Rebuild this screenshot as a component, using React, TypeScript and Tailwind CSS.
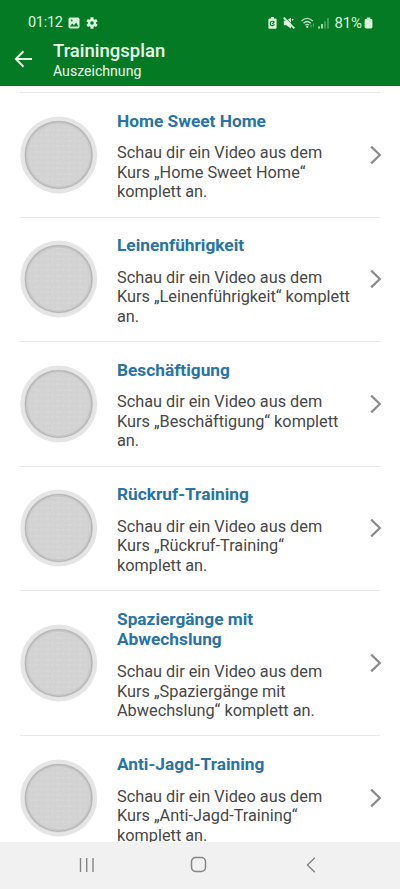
import React from 'react';

const items = [
  {
    title: 'Home Sweet Home',
    text: 'Schau dir ein Video aus dem\nKurs „Home Sweet Home“\nkomplett an.',
  },
  {
    title: 'Leinenführigkeit',
    text: 'Schau dir ein Video aus dem\nKurs „Leinenführigkeit“ komplett\nan.',
  },
  {
    title: 'Beschäftigung',
    text: 'Schau dir ein Video aus dem\nKurs „Beschäftigung“ komplett\nan.',
  },
  {
    title: 'Rückruf-Training',
    text: 'Schau dir ein Video aus dem\nKurs „Rückruf-Training“\nkomplett an.',
  },
  {
    title: 'Spaziergänge mit\nAbwechslung',
    text: 'Schau dir ein Video aus dem\nKurs „Spaziergänge mit\nAbwechslung“ komplett an.',
  },
  {
    title: 'Anti-Jagd-Training',
    text: 'Schau dir ein Video aus dem\nKurs „Anti-Jagd-Training“\nkomplett an.',
  },
];

const StatusBar = () => (
  <div className="flex h-[38px] items-end justify-between pb-[6.5px] pl-[28px] pr-[27px] text-[#d9f7d9]">
    <div className="flex items-center">
      <span className="w-[40px] whitespace-nowrap text-[14.5px] leading-[18px] tracking-[-0.3px]">01:12</span>
      <svg width="12" height="12" viewBox="0 0 12 12" className="block">
        <rect x="0.5" y="0.5" width="11" height="11" rx="1.8" fill="currentColor" />
        <path d="M1.8 9.6 4.3 6.5l1.6 1.8 2.2-2.9 2.4 4.2z" fill="#057a25" />
        <circle cx="3.7" cy="3.5" r="0.9" fill="#057a25" />
      </svg>
      <svg width="12" height="12" viewBox="0 0 12 12" className="ml-[6px] block">
        <g stroke="currentColor" strokeWidth="3">
          <path d="M6 .3v11.4M1.1 3.2l9.8 5.6M1.1 8.8l9.8-5.6" />
        </g>
        <circle cx="6" cy="6" r="4.1" fill="currentColor" />
        <circle cx="6" cy="6" r="1.8" fill="#057a25" />
      </svg>
    </div>
    <div className="flex items-center">
      <svg width="9" height="12" viewBox="0 0 9 12" className="block">
        <path d="M3 0h3v1.4h1.6q1 0 1 1v8.4q0 1-1 1H1.4q-1 0-1-1V2.4q0-1 1-1H3z" fill="currentColor" />
        <path d="M6.2 5.2a2.2 2.2 0 1 0 .2 2.1M4.2 7l2.4-2.3" fill="none" stroke="#057a25" strokeWidth="1.1" />
      </svg>
      <svg width="12" height="12" viewBox="0 0 12 12" className="ml-[6px] block">
        <path d="M.8 3.7h2.6L8 .4v11.2L3.4 8.3H.8z" fill="currentColor" />
        <path d="M9 3.3 10.3 2" stroke="currentColor" strokeWidth="1.3" />
        <path d="M2.2.2 12 10" stroke="#057a25" strokeWidth="0.7" />
        <path d="M.7.7 11.3 11.3" stroke="currentColor" strokeWidth="1.9" />
      </svg>
      <svg width="14" height="12" viewBox="0 0 14 12" className="ml-[6px] block">
        <g fill="none" stroke="currentColor" strokeWidth="1.2" opacity="0.85">
          <path d="M.6 4Q6 -1.2 11.8 4" />
          <path d="M2.5 6.2q3.6-3.4 7.3 0" />
          <path d="M4.4 8.2q1.8-1.7 3.6 0" />
        </g>
        <circle cx="6.2" cy="9.8" r="1.1" fill="currentColor" />
        <path d="M10 7.5v3.2M12.4 6.5v3.2" stroke="currentColor" opacity="0.4" />
      </svg>
      <svg width="12" height="12" viewBox="0 0 12 12" className="ml-[3px] block">
        <path d="M1 11.4V9.6M4 11.4V7" stroke="currentColor" strokeWidth="1.5" />
        <path d="M7 11.4V4.2M10 11.4V1" stroke="currentColor" strokeWidth="1.5" opacity="0.4" />
      </svg>
      <span className="ml-[5px] w-[29.5px] whitespace-nowrap text-[15px] leading-[18px] tracking-[-0.2px]">81%</span>
      <svg width="9" height="12" viewBox="0 0 9 12" className="block">
        <path d="M2.7.5h3.6v1.4H7q1.4 0 1.4 1.4v6.8q0 1.4-1.4 1.4H2Q.6 11.5.6 10.1V3.3Q.6 1.9 2 1.9h.7z" fill="currentColor" />
      </svg>
    </div>
  </div>
);

const Header = () => (
  <header className="h-[86px] shrink-0 bg-[#057a25]">
    <StatusBar />
    <div className="flex h-[43px] items-center pl-[14px] text-[#eaffea]">
      <svg width="19" height="18" viewBox="0 0 19 18" className="-mt-px block">
        <path d="M9.5 1.2 1.8 9l7.7 7.8M2 9h16" fill="none" stroke="currentColor" strokeWidth="2" />
      </svg>
      <div className="ml-5">
        <h1 className="text-[18.5px] font-medium leading-[22px]">Trainingsplan</h1>
        <p className="text-[14.1px] leading-[18px]">Auszeichnung</p>
      </div>
    </div>
  </header>
);

// Empty badge slot: light ring around a faintly woven grey disc
const Medal = () => (
  <svg width="78" height="78" viewBox="0 0 78 78" className="-mt-[3px] block shrink-0">
    <defs>
      <pattern id="weave" width="11" height="11" patternUnits="userSpaceOnUse">
        <rect width="11" height="11" fill="#d3d3d3" />
        <path d="M0 3h8M3 8h8" stroke="#d7d7d7" strokeWidth="1.5" />
        <path d="M2 0v6M8 5v6" stroke="#d0d0d0" />
      </pattern>
    </defs>
    <circle cx="38.7" cy="39" r="38.5" fill="#e5e5e5" />
    <circle cx="38.7" cy="39" r="34.5" fill="#dadada" />
    <circle cx="38.7" cy="39" r="33.2" fill="url(#weave)" stroke="#b7b7b7" strokeWidth="1.5" />
    <circle cx="38.7" cy="39" r="31.9" fill="none" stroke="#c8c8c8" strokeWidth="1.2" />
  </svg>
);

const NavBar = () => (
  <nav className="flex h-[47px] shrink-0 items-center bg-[#f1f1f1] pl-[79px] text-[#858585]">
    <svg width="15" height="16" viewBox="0 0 15 16" className="-mt-[2px] block">
      <path d="M1.5 1v14M7.7 1v14M14 1v14" stroke="currentColor" strokeWidth="1.4" />
    </svg>
    <svg width="17" height="17" viewBox="0 0 17 17" className="-mt-[2px] ml-[96px] block">
      <rect x="1.5" y="1.5" width="14" height="14" rx="4.2" fill="none" stroke="currentColor" strokeWidth="1.5" />
    </svg>
    <svg width="10" height="16" viewBox="0 0 10 16" className="-mt-[2px] ml-[99px] block">
      <path d="M8.8.8 1.5 8l7.3 7.2" fill="none" stroke="currentColor" strokeWidth="1.4" />
    </svg>
  </nav>
);

export default function App() {
  return (
    <div className="flex h-[889px] w-[400px] flex-col overflow-hidden bg-white font-[Roboto,sans-serif]">
      <Header />
      <main className="min-h-0 flex-1 overflow-hidden px-5 pt-[6px]">
        {items.map((item) => (
          <div key={item.title} className="flex items-center border-t border-[#e9e9ec] pb-[14.8px] pt-[17.7px]">
            <Medal />
            <div className="ml-[19px] flex-1">
              <h2 className="whitespace-pre text-[17.3px] font-bold leading-[20.8px] text-[#2874a6]">{item.title}</h2>
              <p className="mt-[12px] whitespace-pre text-[16.3px] leading-[19.4px] text-[#484848]">{item.text}</p>
            </div>
            <svg width="12" height="20" viewBox="0 0 12 20" className="-mr-[1.5px] -mt-[3px] block shrink-0">
              <path d="M1.2 1.6 9.8 10l-8.6 8.4" fill="none" stroke="#8c8c8c" strokeWidth="2.2" />
            </svg>
          </div>
        ))}
      </main>
      <NavBar />
    </div>
  );
}
